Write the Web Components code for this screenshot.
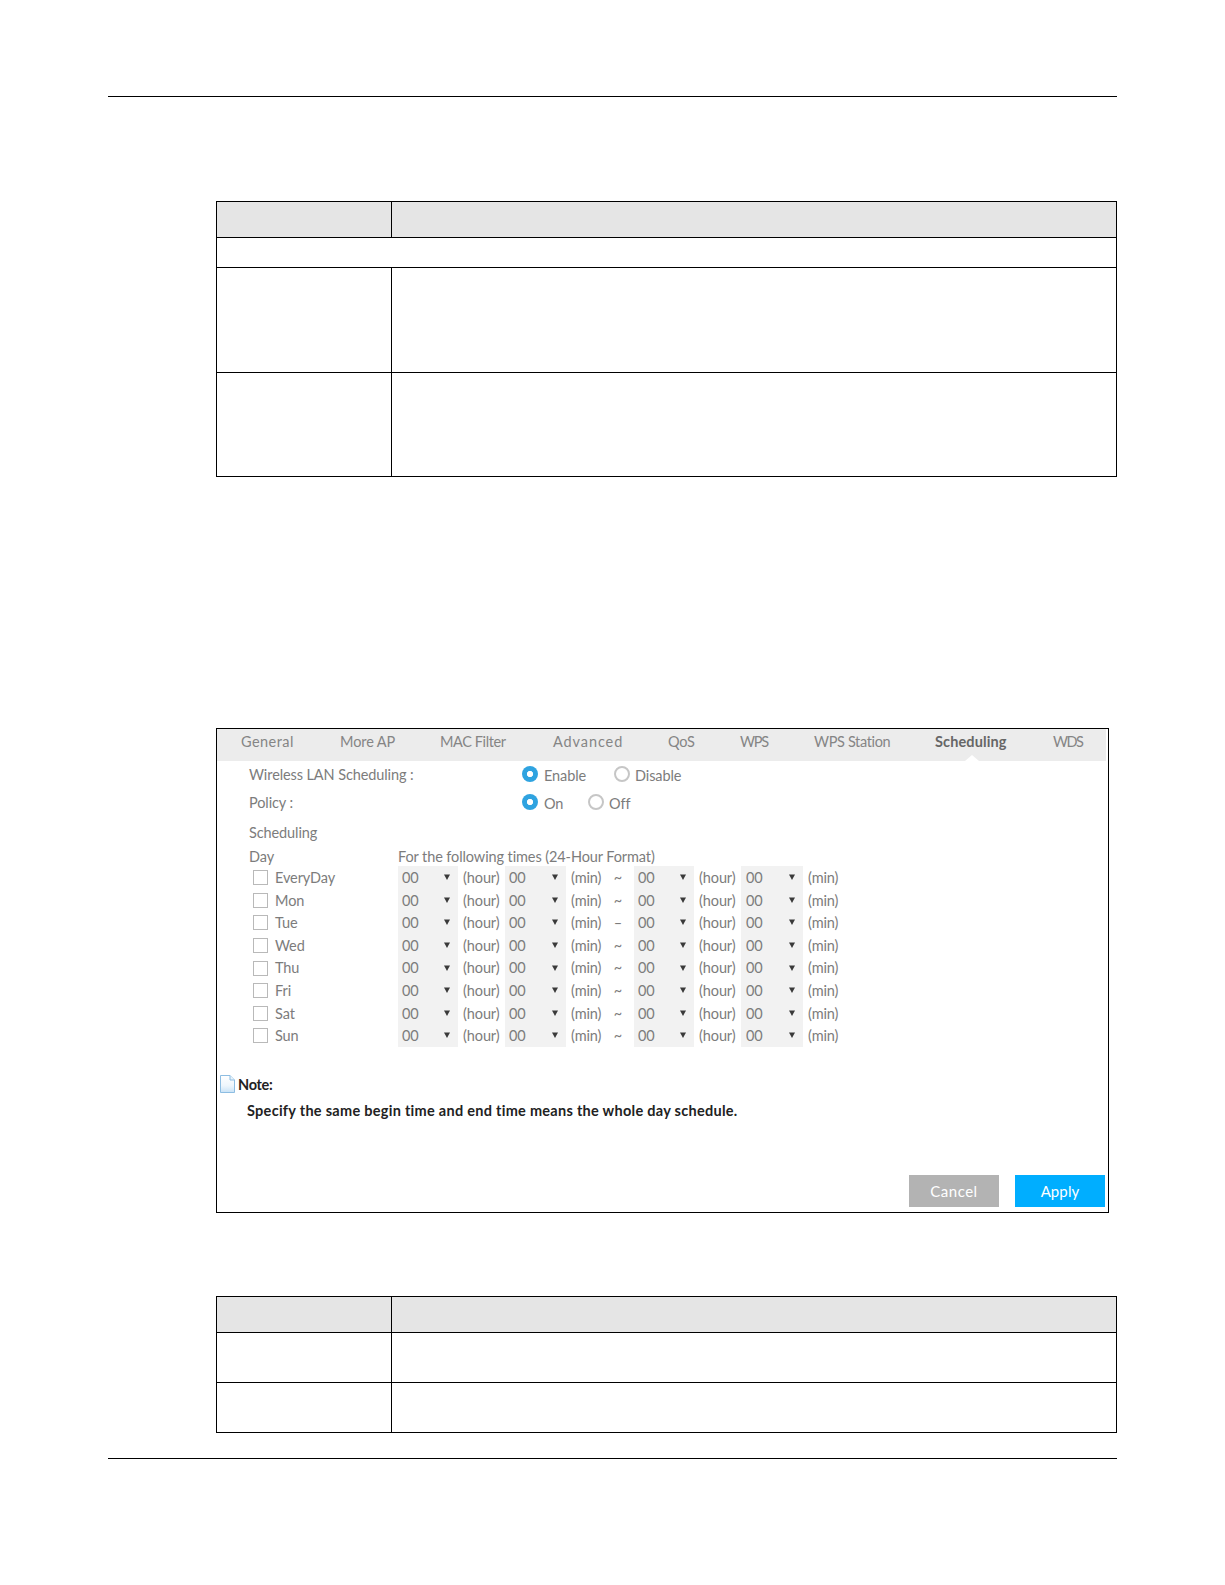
<!DOCTYPE html>
<html><head><meta charset="utf-8"><title>Scheduling</title>
<style>
html,body{margin:0;padding:0;background:#fff}
body{font-family:Lato,"Liberation Sans",sans-serif}
</style></head><body>
<zy-page>
  <zy-rule></zy-rule>
  <zy-table style="margin-top:104px" rows="36 30 105 104" span="1"></zy-table>
  <zy-panel style="margin-top:251px">
    <zy-tabs>
      <zy-tab w="53" ls=".45">General</zy-tab><zy-tab w="54" ls="-.1">More AP</zy-tab><zy-tab w="67" ls="-.4">MAC Filter</zy-tab><zy-tab w="69" ls=".9">Advanced</zy-tab><zy-tab w="26" ls="-.2">QoS</zy-tab><zy-tab w="28" ls="-1.2">WPS</zy-tab><zy-tab w="75" ls="-.35">WPS Station</zy-tab><zy-tab w="72" ls=".12" active>Scheduling</zy-tab><zy-tab w="29" ls="-1.5">WDS</zy-tab>
    </zy-tabs>
    <zy-field label="Wireless LAN Scheduling :">
      <zy-radio checked w="92">Enable</zy-radio><zy-radio>Disable</zy-radio>
    </zy-field>
    <zy-field label="Policy :">
      <zy-radio checked w="66">On</zy-radio><zy-radio>Off</zy-radio>
    </zy-field>
    <zy-heads></zy-heads>
    <zy-sched day="EveryDay"></zy-sched>
    <zy-sched day="Mon"></zy-sched>
    <zy-sched day="Tue" sep="–"></zy-sched>
    <zy-sched day="Wed"></zy-sched>
    <zy-sched day="Thu"></zy-sched>
    <zy-sched day="Fri"></zy-sched>
    <zy-sched day="Sat"></zy-sched>
    <zy-sched day="Sun"></zy-sched>
    <zy-note>Specify the same begin time and end time means the whole day schedule.</zy-note>
    <zy-actions><zy-button style="letter-spacing:.5px">Cancel</zy-button><zy-button primary>Apply</zy-button></zy-actions>
  </zy-panel>
  <zy-table style="margin-top:83px" rows="36 50 50"></zy-table>
  <zy-rule style="margin-top:25px"></zy-rule>
</zy-page>
<script>
const FONT='font-family:Lato,"Liberation Sans",sans-serif;font-size:14.5px;letter-spacing:-.1px;color:#7c7c7c;';
function def(name,css,html,init){
  customElements.define(name,class extends HTMLElement{
    constructor(){super();this.attachShadow({mode:'open'});}
    connectedCallback(){
      const h=typeof html==='function'?html(this):html;
      this.shadowRoot.innerHTML='<style>'+css+'</style>'+h;
      if(init)init(this);
    }
  });
}
def('zy-page',':host{display:block;width:1225px;height:1585px;padding-top:96px;box-sizing:border-box;overflow:hidden}','<slot></slot>');
def('zy-rule',':host{display:block;margin-left:108px;width:1009px;height:1px;background:#000}','');
def('zy-table',`:host{display:block;margin-left:216px;width:901px;box-sizing:border-box;border:1px solid #000;border-bottom:0}
.r{display:grid;grid-template-columns:174px 1fr;border-bottom:1px solid #000;box-sizing:border-box}
.r.h{background:#e5e5e5}
.c+.c{border-left:1px solid #000}
.s{grid-column:1/3}`,el=>{
  const rows=el.getAttribute('rows').split(' ');
  const sp=el.getAttribute('span');
  return rows.map((h,i)=>{
    const s=sp&&+sp===i;
    return `<div class="r${i==0?' h':''}" style="height:${h}px">`+(s?'<div class="c s"></div>':'<div class="c"></div><div class="c"></div>')+'</div>';
  }).join('');
});
def('zy-panel',`:host{display:block;margin-left:216px;width:893px;box-sizing:border-box;border:1px solid #000;${FONT}}`,'<slot></slot>');
def('zy-tabs',':host{display:flex;gap:46px;height:32px;margin-right:2px;padding-left:24px;background:#ececec;align-items:center}','<slot></slot>');
def('zy-tab',`:host{display:block;position:relative;white-space:nowrap;height:32px;line-height:26px;color:#858585}
:host([active]){font-weight:700;color:#666}
:host([active])::after{content:"";position:absolute;left:30px;bottom:0;border:7px solid transparent;border-top:0;border-bottom:6px solid #fff}`,
'<slot></slot>',el=>{el.style.width=el.getAttribute('w')+'px';el.style.letterSpacing=el.getAttribute('ls')+'px';});
def('zy-field',`:host{display:flex;height:28px;align-items:center;padding-left:32px;white-space:nowrap}
.l{width:273px;flex:none;margin-top:-1px}.o{display:flex;align-items:center}`,
el=>`<div class="l">${el.getAttribute('label')}</div><div class="o"><slot></slot></div>`);
def('zy-radio',`:host{display:inline-flex;align-items:center;gap:5px;box-sizing:border-box}
:host([checked]){gap:6px}
.d{width:16px;height:16px;border-radius:50%;border:2px solid #c6c6c6;box-sizing:border-box;background:#fff;flex:none;margin-top:-2px}
:host([checked]) .d{border:0;background:radial-gradient(circle,#fff 0 2.8px,#2fa3e0 3.4px)}`,
'<div class="d"></div><slot></slot>',el=>{if(el.getAttribute('w'))el.style.width=el.getAttribute('w')+'px';});
def('zy-heads',`:host{display:block;padding-left:32px}
.a{height:28px;padding-top:2px;line-height:28px}
.b{height:19px;line-height:19px;display:flex}
.b span:first-child{width:149px}`,
'<div class="a">Scheduling</div><div class="b"><span>Day</span><span>For the following times (24-Hour Format)</span></div>');
def('zy-select',`:host{display:flex;align-items:center;justify-content:space-between;background:#f2f2f2;height:22.6px;padding:0 8px 0 4px;box-sizing:border-box}
:host([wide]){padding-left:5px}
span{display:block;position:relative;top:1px}
svg{display:block}`,
'<span>00</span><svg width="6" height="6" viewBox="0 0 6 6"><path d="M0 .5H6L3 6Z" fill="#3a3a3a"/></svg>');
def('zy-check',':host{display:block;width:15px;height:15px;box-sizing:border-box;border:1.5px solid #b9b9b9;background:#fff}','');
def('zy-sched',`:host{display:grid;grid-template-columns:145px 60px 47px 61px 38px 30px 60px 47px 62px 40px;height:22.6px;line-height:24.6px;margin-left:36px;white-space:nowrap}
.d{display:flex;align-items:center;gap:7px}
.d zy-check{margin-top:-1px}
.u{padding-left:5px}
.t{text-align:center;padding-right:2px}`,
el=>`<div class="d"><zy-check></zy-check><span>${el.getAttribute('day')}</span></div>
<zy-select></zy-select><div class="u">(hour)</div><zy-select></zy-select><div class="u">(min)</div>
<div class="t">${el.getAttribute('sep')||'~'}</div>
<zy-select></zy-select><div class="u">(hour)</div><zy-select wide></zy-select><div class="u">(min)</div>`);
def('zy-note',`:host{display:block;margin-top:28px;color:#111}
.n{display:flex;height:18px;line-height:20px;padding-left:3px;gap:3px;font-weight:700;color:#222;letter-spacing:-.3px}
.t{margin-top:10px;padding-left:30px;height:19px;line-height:15px;white-space:nowrap;font-weight:700;color:#222;letter-spacing:.28px}
svg{display:block;flex:none}`,
`<div class="n"><svg width="15" height="18" viewBox="0 0 15 18"><defs><linearGradient id="g" x1="0" y1="0" x2="0" y2="1"><stop offset="0" stop-color="#ffffff"/><stop offset=".6" stop-color="#eef6fc"/><stop offset="1" stop-color="#c8e2f6"/></linearGradient></defs><path d="M.5.5H10L14.5 5V17.5H.5Z" fill="url(#g)" stroke="#8dbde2"/><path d="M10 .5V5H14.5" fill="#e8f3fb" stroke="#8dbde2"/></svg><span>Note:</span></div><div class="t"><slot></slot></div>`);
def('zy-actions',':host{display:flex;justify-content:flex-end;gap:16px;margin-top:53px;padding:0 3px 5px 0}','<slot></slot>');
def('zy-button',`:host{display:flex;align-items:center;justify-content:center;width:90px;height:32px;background:#b3b3b3;color:#fff;font-size:15px;letter-spacing:.1px}
:host([primary]){background:#00aeff}`,'<slot></slot>');
</script>
</body></html>
